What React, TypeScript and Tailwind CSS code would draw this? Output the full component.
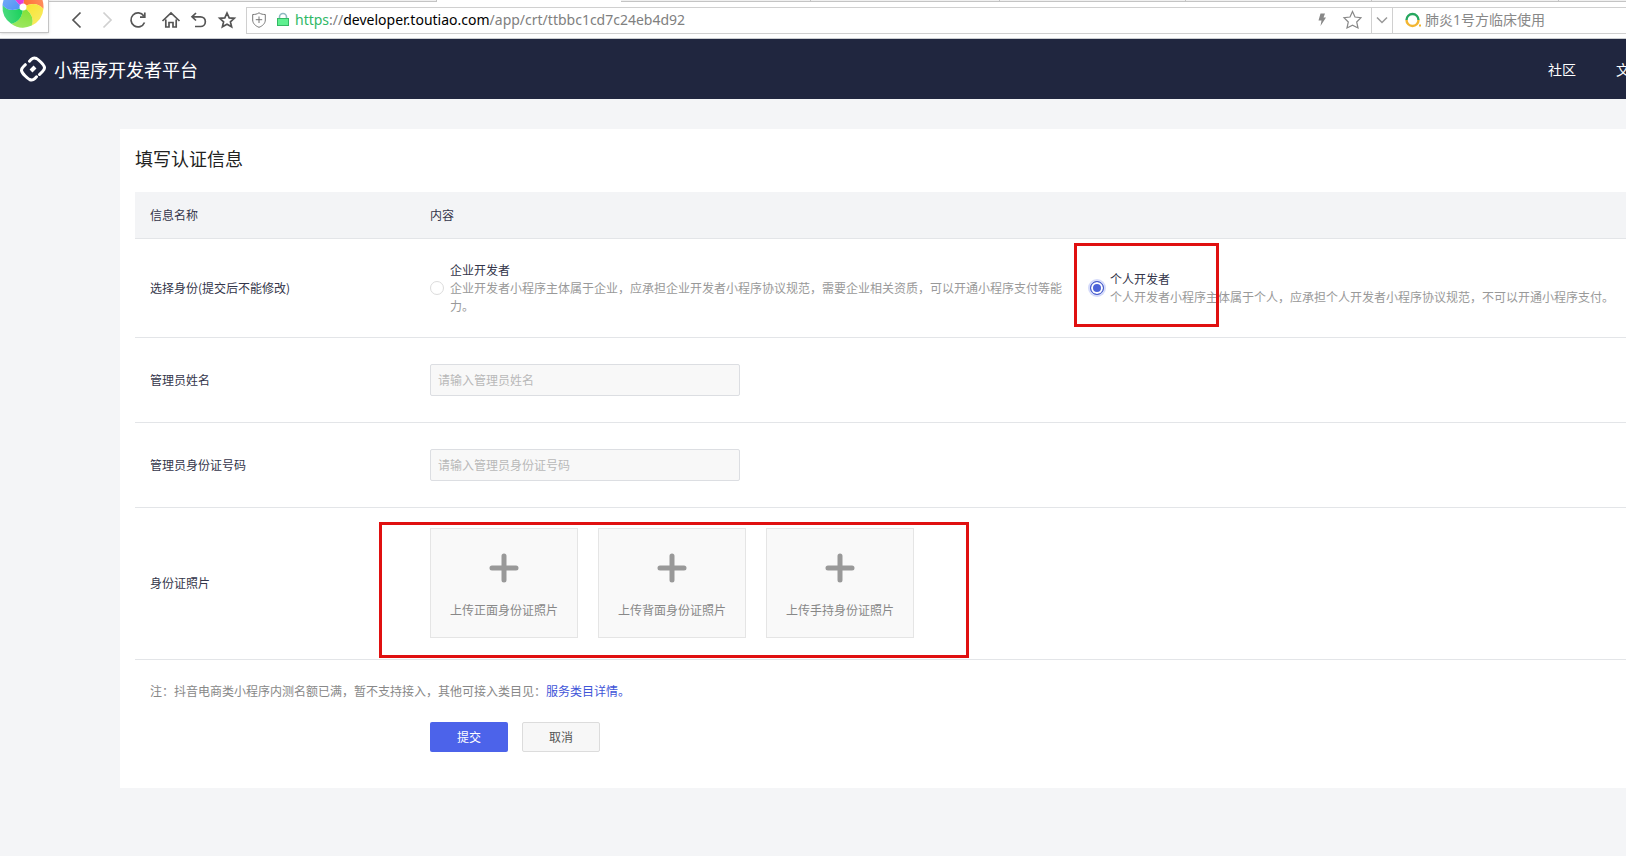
import React, { useState } from 'react';

const uploads = ['上传正面身份证照片', '上传背面身份证照片', '上传手持身份证照片'];

const tabs = [389, 184, 190, 189, 186, 186, 187];

const swirl = ['#ff6a2a', '#f7e32a', '#7ee02f', '#10cf55', '#4a90f5', '#e02fd8'];

const BrowserLogo = () => (
  <svg className="absolute -top-[15px] left-px h-11 w-11" viewBox="-22 -22 44 44">
    <defs>
      <linearGradient id="petal-shade" x1="0" y1="0" x2="1" y2="1">
        <stop offset="0" stopColor="#fff" stopOpacity="0" />
        <stop offset="1" stopColor="#fff" stopOpacity="0.3" />
      </linearGradient>
    </defs>
    {swirl.map((color, i) => (
      <g key={color} transform={`rotate(${i * 60 - 55})`}>
        <path d="M0 0Q12 -8 20.500 0A20.500 20.500 0 0 1 10.200 17.700Q12.900 6.400 0 0Z" fill={color} />
        <path d="M0 0Q12 -8 20.500 0A20.500 20.500 0 0 1 10.200 17.700Q12.900 6.400 0 0Z" fill="url(#petal-shade)" />
      </g>
    ))}
    <circle r="3.500" fill="#fff" />
  </svg>
);

interface IconProps {
  d: string;
  className?: string;
  label: string;
}

const ToolButton = ({ d, className = 'text-[#555]', label }: IconProps) => (
  <button type="button" aria-label={label} className={`shrink-0 ${className}`}>
    <svg className="h-5 w-5" viewBox="0 0 20 20" fill="none" stroke="currentColor" strokeWidth="1.7">
      <path d={d} />
    </svg>
  </button>
);

const STAR = 'M10 3L12.200 7.900L17.300 8.300L13.400 11.800L14.600 16.800L10 14.200L5.400 16.800L6.600 11.800L2.700 8.300L7.800 7.900Z';

const BrowserBar = () => {
  const [keyword, setKeyword] = useState('肺炎1号方临床使用');

  return (
    <div className="relative h-[39px] overflow-hidden border-b border-[#c9ccd0] bg-white">
      <div className="flex h-[2px] pl-12">
        {tabs.map((width, i) => (
          <div
            key={i}
            className={i === 1 ? 'bg-white' : 'border-r border-b border-[#c4c4c4] bg-[#f0f0f0]'}
            style={{ width }}
          />
        ))}
        <div className="flex-1 border-b border-[#c4c4c4] bg-[#f0f0f0]" />
      </div>
      <div className="absolute top-0 left-0 h-[33px] w-[49px] border-r border-b border-[#c4c4c4] bg-white shadow-sm">
        <BrowserLogo />
      </div>
      <div className="flex h-9 items-center pl-[68px]">
        <div className="flex w-[178px] shrink-0 items-center">
          <div className="flex w-[93px] gap-[10px]">
            <ToolButton label="后退" d="M12.500 2.500L5 10L12.500 17.500" />
            <ToolButton label="前进" d="M5.500 2.500L13 10L5.500 17.500" className="text-[#d0d0d0]" />
            <ToolButton label="刷新" d="M15.800 6A7 7 0 1 0 16.500 12.500M16.800 2.500V7.200H12" />
          </div>
          <div className="flex gap-2">
            <ToolButton label="主页" d="M1.500 11L10 3L18.500 11M4.800 9.500V17H8V12.500H12V17H15.200V9.500" />
            <ToolButton label="恢复" d="M7 3L3 6.800L7 10.500M3 6.800H11.500A4.800 4.800 0 0 1 11.500 16.500H6" />
            <ToolButton label="收藏" d={STAR} />
          </div>
        </div>
        <div className="flex h-[27px] min-w-0 flex-1 items-center border border-r-0 border-[#d0d0d0] pl-1 font-['Noto_Sans','Noto_Sans_CJK_SC',sans-serif] text-sm">
          <svg className="h-4 w-4 shrink-0" viewBox="0 0 16 16" fill="none" stroke="#777" strokeWidth="1">
            <path d="M8 .8C10 2.200 12 2.500 14.300 2.500V8C14.300 11.500 11.500 14 8 15.300C4.500 14 1.700 11.500 1.700 8V2.500C4 2.500 6 2.200 8 .8ZM8 4.500V11M4.800 7.700H11.200" />
          </svg>
          <svg className="ml-2 h-4 w-4 shrink-0" viewBox="0 0 16 16">
            <path d="M4.500 7V5A3.500 3.500 0 0 1 11.500 5V7" fill="none" stroke="#8fb8c0" strokeWidth="1.600" />
            <rect x="2.500" y="6.500" width="11" height="7" fill="#5ff090" stroke="#35b865" />
          </svg>
          <span className="ml-1 min-w-0 flex-1 truncate text-black">
            <span className="text-[#2fb866]">https</span>
            <span className="text-[#808080]">://</span>
            developer.toutiao.com
            <span className="text-[#808080]">/app/crt/ttbbc1cd7c24eb4d92</span>
          </span>
          <button type="button" aria-label="极速模式" className="shrink-0">
            <svg className="h-4 w-4" viewBox="0 0 16 16" fill="#888">
              <path d="M6.500 1.500H11L9.500 5.500H12L6.500 14L7.500 8.500H4.500Z" />
            </svg>
          </button>
          <button type="button" aria-label="添加收藏" className="ml-3 shrink-0 text-[#888]">
            <svg className="h-5 w-5" viewBox="0 0 20 20" fill="none" stroke="currentColor" strokeWidth="1.200">
              <path d="M10.500 1.500L13 7L19 7.700L14.700 12L16 18L10.500 15.200L5 18L6.300 12L2 7.700L8 7Z" />
            </svg>
          </button>
          <button
            type="button"
            aria-label="展开"
            className="ml-[9px] flex h-full w-[22px] shrink-0 items-center justify-center border-x border-[#d0d0d0]"
          >
            <svg className="h-3 w-3" viewBox="0 0 12 12" fill="none" stroke="#999" strokeWidth="1.500">
              <path d="M1 3.500L6 8.500L11 3.500" />
            </svg>
          </button>
          <svg className="ml-3 h-4 w-4 shrink-0" viewBox="0 0 16 16" fill="none" strokeWidth="2.400">
            <path d="M1.500 8A6 6 0 0 1 13.500 8" stroke="#27a75f" />
            <path d="M1.500 8A6 6 0 0 0 13.500 8" stroke="#f2b632" />
            <path d="M14 13.500H16" stroke="#f2b632" strokeWidth="2" />
          </svg>
          <input
            aria-label="搜索"
            value={keyword}
            onChange={(e) => setKeyword(e.target.value)}
            className="ml-1 w-[201px] shrink-0 text-[#888] outline-none"
          />
        </div>
      </div>
    </div>
  );
};

const SiteHeader = () => (
  <header className="flex h-[60px] items-center justify-between overflow-hidden bg-[#20263f] pl-5 text-white">
    <div className="flex items-center gap-2">
      <svg className="h-[26px] w-[26px]" viewBox="0 0 26 26" fill="none" stroke="#fff" strokeWidth="3" strokeLinecap="round" strokeLinejoin="round">
        <path d="M9.500 5.200L11.300 3.300Q13.500 1.200 16.500 2.500Q18 3.200 21 6.200Q24.300 9.500 24.500 11.500Q24.600 13.500 22.500 15.500L19.500 18.500" />
        <path d="M16.500 20.800L14.700 22.700Q12.500 24.800 9.500 23.500Q8 22.800 5 19.800Q1.700 16.500 1.500 14.500Q1.400 12.500 3.500 10.500L5.300 8.700" />
        <path d="M11 15L15 11" strokeWidth="4" strokeLinecap="butt" />
      </svg>
      <h1 className="text-lg">小程序开发者平台</h1>
    </div>
    <nav className="-mr-[18px] flex shrink-0 gap-10 text-sm whitespace-nowrap">
      <a href="#community">社区</a>
      <a href="#docs">文档</a>
    </nav>
  </header>
);

interface RoleOptionProps {
  id: string;
  title: string;
  desc: string;
  checked: boolean;
  onSelect: () => void;
}

const RoleOption = ({ id, title, desc, checked, onSelect }: RoleOptionProps) => (
  <label htmlFor={id} className="flex h-full items-center gap-[6px]">
    <input
      id={id}
      type="radio"
      name="role"
      checked={checked}
      onChange={onSelect}
      className="h-[14px] w-[14px] shrink-0 appearance-none rounded-full border border-[#dcdcdc] bg-white checked:border-[#4459c8] checked:bg-[#4c63d8] checked:shadow-[inset_0_0_0_2px_#fff,0_0_0_2px_#d5dbfa]"
    />
    <span>
      <span className="block">{title}</span>
      <span className="block text-[#999]">{desc}</span>
    </span>
  </label>
);

export default function App() {
  const [role, setRole] = useState('personal');
  const [name, setName] = useState('');
  const [idNumber, setIdNumber] = useState('');

  const inputClass =
    'block h-8 w-[310px] rounded-xs border border-[#dcdee2] bg-[#f8f8f8] px-[7px] outline-none placeholder:text-[#b8b8b8]';

  return (
    <div className="min-h-screen overflow-hidden bg-[#f4f5f7] font-['Noto_Sans_CJK_SC',sans-serif]">
      <BrowserBar />
      <SiteHeader />

      <main className="mt-[30px] ml-[120px] bg-white pb-9 pl-[15px] text-xs leading-[18px] text-[#33354a]">
        <h2 className="flex h-[63px] items-center pb-[6px] text-lg text-[#222]">填写认证信息</h2>
        <form onSubmit={(e) => e.preventDefault()}>
          <table className="w-full table-fixed border-collapse text-left">
            <thead>
              <tr className="h-[46px] border-b border-[#e3e5e8] bg-[#f3f4f6]">
                <th className="w-[295px] pl-[15px] font-normal">信息名称</th>
                <th className="font-normal">内容</th>
              </tr>
            </thead>
            <tbody>
              <tr className="h-[99px] border-b border-[#e3e5e8]">
                <td className="pl-[15px]">选择身份(提交后不能修改)</td>
                <td>
                  <div className="grid grid-cols-[minmax(0,640px)_minmax(0,1fr)] gap-5">
                    <RoleOption
                      id="role-company"
                      title="企业开发者"
                      desc="企业开发者小程序主体属于企业，应承担企业开发者小程序协议规范，需要企业相关资质，可以开通小程序支付等能力。"
                      checked={role === 'company'}
                      onSelect={() => setRole('company')}
                    />
                    <div className="relative">
                      <RoleOption
                        id="role-personal"
                        title="个人开发者"
                        desc="个人开发者小程序主体属于个人，应承担个人开发者小程序协议规范，不可以开通小程序支付。"
                        checked={role === 'personal'}
                        onSelect={() => setRole('personal')}
                      />
                      <div className="pointer-events-none absolute -top-[18px] -left-4 h-[84px] w-[145px] border-3 border-[#e01010]" />
                    </div>
                  </div>
                </td>
              </tr>
              <tr className="h-[85px] border-b border-[#e3e5e8]">
                <td className="pl-[15px]">
                  <label htmlFor="admin-name">管理员姓名</label>
                </td>
                <td>
                  <input
                    id="admin-name"
                    value={name}
                    onChange={(e) => setName(e.target.value)}
                    placeholder="请输入管理员姓名"
                    className={inputClass}
                  />
                </td>
              </tr>
              <tr className="h-[85px] border-b border-[#e3e5e8]">
                <td className="pl-[15px]">
                  <label htmlFor="admin-id">管理员身份证号码</label>
                </td>
                <td>
                  <input
                    id="admin-id"
                    value={idNumber}
                    onChange={(e) => setIdNumber(e.target.value)}
                    placeholder="请输入管理员身份证号码"
                    className={inputClass}
                  />
                </td>
              </tr>
              <tr className="h-[152px] border-b border-[#e3e5e8]">
                <td className="pl-[15px]">身份证照片</td>
                <td>
                  <div className="relative flex gap-5">
                    {uploads.map((text) => (
                      <button
                        key={text}
                        type="button"
                        className="flex h-[110px] w-[148px] shrink-0 flex-col items-center border border-[#e5e5e5] bg-[#f9f9f9] pt-6 text-[#888]"
                      >
                        <svg className="h-[30px] w-[30px]" viewBox="0 0 30 30" stroke="#999" strokeWidth="5" strokeLinecap="round">
                          <path d="M15 3V27M3 15H27" />
                        </svg>
                        <span className="mt-[18px]">{text}</span>
                      </button>
                    ))}
                    <div className="pointer-events-none absolute -top-[6px] -left-[51px] h-[136px] w-[590px] border-3 border-[#e01010]" />
                  </div>
                </td>
              </tr>
            </tbody>
          </table>

          <p className="mt-[22px] pl-[15px] text-[#888]">
            注：抖音电商类小程序内测名额已满，暂不支持接入，其他可接入类目见：
            <a href="#category" className="text-[#3f55d8]">服务类目详情。</a>
          </p>
          <div className="mt-[22px] flex gap-[14px] pl-[295px]">
            <button type="submit" className="h-[30px] w-[78px] rounded-xs bg-[#4c63ea] text-white">
              提交
            </button>
            <button type="button" className="h-[30px] w-[78px] rounded-xs border border-[#dcdcdc] bg-[#f7f7f7] text-[#555]">
              取消
            </button>
          </div>
        </form>
      </main>
    </div>
  );
}
